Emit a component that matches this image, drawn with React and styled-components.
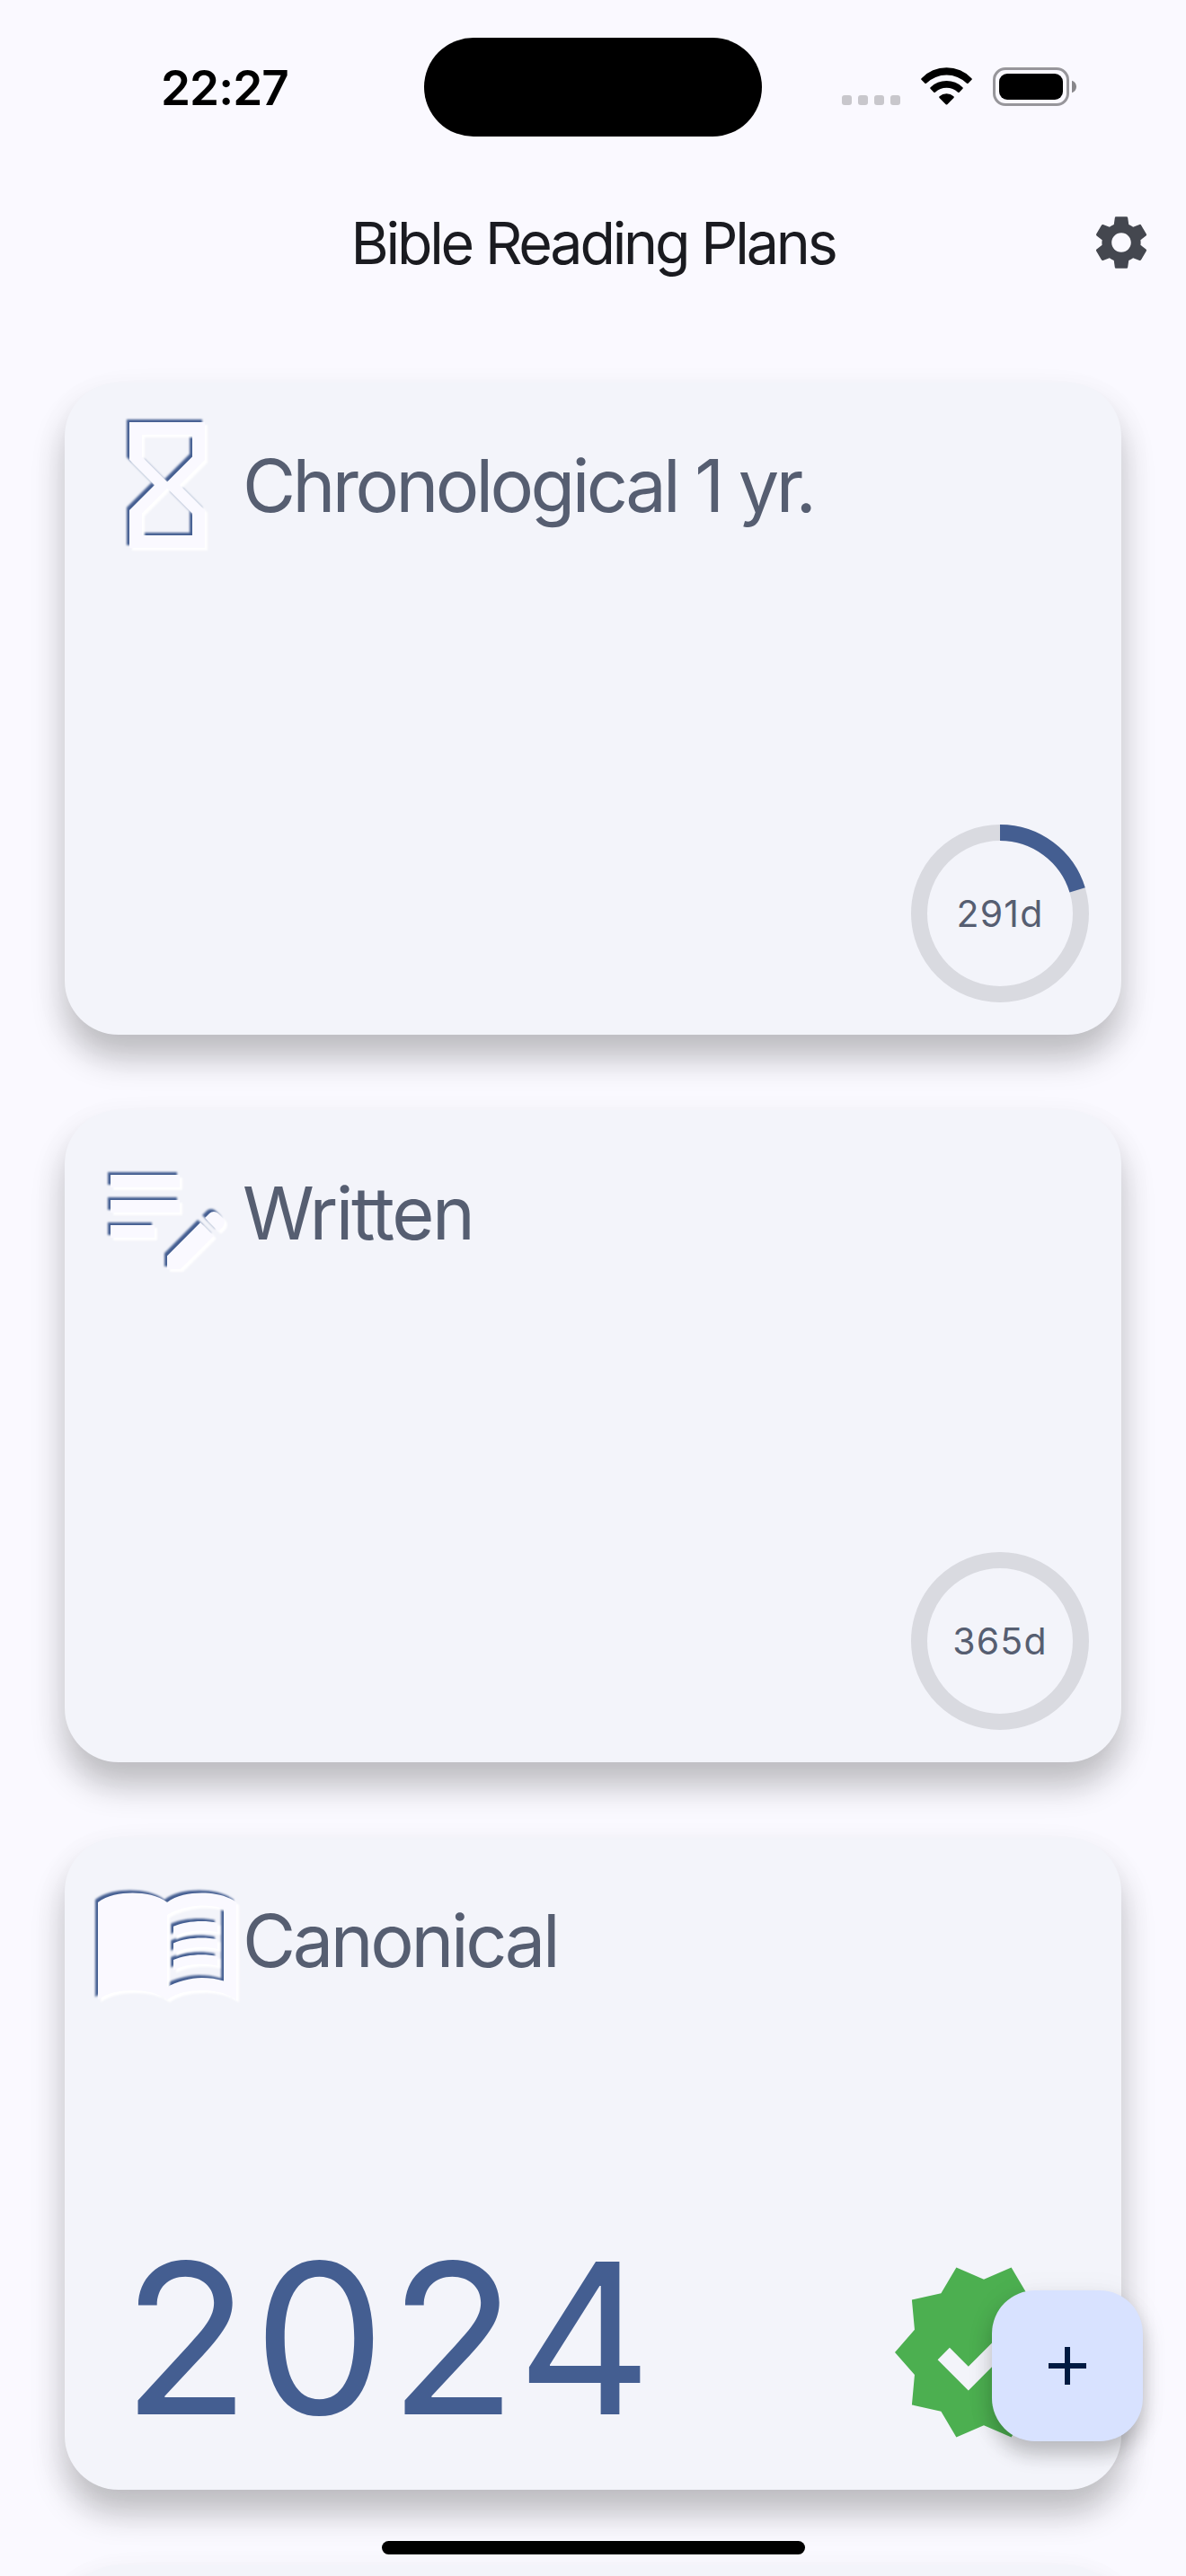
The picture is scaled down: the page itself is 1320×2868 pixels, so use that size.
import React from "react";
import styled, { createGlobalStyle } from "styled-components";
import { MdSettings, MdVerified } from "react-icons/md";

const color = {
  surface: "#faf9ff",
  card: "#f3f4fa",
  text: "#1a1b20",
  muted: "#565e71",
  primary: "#445e91",
  track: "#d9dae0",
  icon: "#44474f",
  fab: "#d8e2ff",
  onFab: "#001a41",
  done: "#4caf50",
};

const GlobalStyle = createGlobalStyle`
  * { box-sizing: border-box; }
  body { margin: 0; background: ${color.surface}; }
`;

const Screen = styled.div`
  position: relative;
  display: flex;
  flex-direction: column;
  width: 1320px;
  height: 2868px;
  overflow: hidden;
  background: ${color.surface};
  font-family: Inter, "Liberation Sans", sans-serif;
`;

const StatusBar = styled.div`
  display: grid;
  grid-template-columns: 472px 376px 472px;
  flex: none;
  height: 186px;
  padding-top: 42px;
`;

const Clock = styled.div`
  height: 112px;
  padding: 0 0 0 179px;
  font-size: 53px;
  font-weight: 600;
  line-height: 112px;
  letter-spacing: -0.9px;
  color: #000;
`;

const Island = styled.div`
  height: 110px;
  border-radius: 55px;
  background: #000;
`;

const StatusIcons = styled.div`
  display: flex;
  align-items: flex-end;
  height: 76px;
  padding-left: 89px;
`;

const SignalDots = styled.div`
  display: flex;
  gap: 7px;
  margin-bottom: 1px;
  span {
    width: 11px;
    height: 11px;
    border-radius: 3px;
    background: #c8c7cc;
  }
`;

const WifiSvg = styled.svg`
  margin: 0 23px 1px;
`;

const AppBar = styled.header`
  display: grid;
  grid-template-columns: 144px 1fr 144px;
  align-items: center;
  justify-items: center;
  flex: none;
  height: 168px;
`;

const AppTitle = styled.h1`
  grid-column: 2;
  margin: 0;
  padding-top: 2px;
  font-size: 64.5px;
  font-weight: 400;
  line-height: 84px;
  letter-spacing: -3.2px;
  white-space: nowrap;
  color: ${color.text};
`;

const SettingsButton = styled.button`
  display: flex;
  padding: 0;
  border: 0;
  background: none;
  color: ${color.icon};
`;

const PlanList = styled.main`
  display: flex;
  flex-direction: column;
  gap: 84px;
  padding: 72px;
`;

const Card = styled.article`
  display: flex;
  flex-direction: column;
  justify-content: space-between;
  flex: none;
  height: 726px;
  padding: 30px 36px 36px 30px;
  border-radius: 60px;
  background: ${color.card};
  box-shadow:
    0 26px 36px rgba(0, 0, 0, 0.23),
    0 14px 52px rgba(0, 0, 0, 0.03);
`;

const CardHeader = styled.div`
  display: flex;
  align-items: center;
  height: 168px;
`;

const PlanTitle = styled.h2`
  margin: 0;
  padding-top: 1px;
  font-size: 81px;
  font-weight: 400;
  line-height: 108px;
  letter-spacing: ${(p) => p.$tracking}px;
  white-space: nowrap;
  color: ${color.muted};
`;

const CardFooter = styled.div`
  display: flex;
  align-items: flex-end;
  justify-content: ${(p) => (p.$split ? "space-between" : "flex-end")};
  padding: ${(p) => (p.$split ? "0 9px 9px 34px" : "0")};
`;

const Year = styled.div`
  margin-bottom: 8px;
  font-size: 233px;
  line-height: 232px;
  letter-spacing: 3.9px;
  color: ${color.primary};
`;

const Gauge = styled.div`
  display: grid;
  width: 198px;
  height: 198px;
  > * {
    grid-area: 1 / 1;
  }
`;

const GaugeLabel = styled.span`
  align-self: center;
  justify-self: center;
  font-size: 41px;
  line-height: 60px;
  letter-spacing: 1.2px;
  color: ${color.muted};
`;

const Fab = styled.button`
  position: absolute;
  right: 48px;
  bottom: 150px;
  display: flex;
  align-items: center;
  justify-content: center;
  width: 168px;
  height: 168px;
  padding: 0;
  border: 0;
  border-radius: 48px;
  background: ${color.fab};
  box-shadow:
    0 14px 22px rgba(0, 0, 0, 0.22),
    0 4px 36px rgba(0, 0, 0, 0.05);
`;

const HomeIndicator = styled.div`
  position: absolute;
  left: 425px;
  bottom: 24px;
  width: 471px;
  height: 15px;
  border-radius: 8px;
  background: #000;
`;

const Embossed = styled.svg`
  flex: none;
  overflow: visible;
  .shade {
    fill: ${color.primary};
    filter: blur(1.2px);
  }
  .light {
    fill: #fff;
    filter: blur(1.2px);
  }
  .face {
    fill: ${color.surface};
  }
`;

const planIcons = {
  hourglass:
    "M6 2v6h.01L6 8.01 10 12l-4 4 .01.01H6V22h12v-5.99h-.01L18 16l-4-4 4-3.99-.01-.01H18V2H6zm10 14.5V20H8v-3.5l4-4 4 4zm-4-5l-4-4V4h8v3.5l-4 4z",
  note:
    "M3 10h11v2H3v-2zm0-2h11V6H3v2zm0 8h7v-2H3v2zm15.01-3.13.71-.71c.39-.39 1.02-.39 1.41 0l.71.71c.39.39.39 1.02 0 1.41l-.71.71-2.12-2.12zm-.71.71-5.3 5.3V21h2.12l5.3-5.3-2.12-2.12z",
  book:
    "M17.5 4.5c-1.95 0-4.05.4-5.5 1.5-1.45-1.1-3.55-1.5-5.5-1.5S2.45 4.9 1 6v15.5C2.45 20.4 4.55 20 6.5 20s4.05.4 5.5 1.5c1.45-1.1 3.55-1.5 5.5-1.5s4.05.4 5.5 1.5V6c-1.45-1.1-3.55-1.5-5.5-1.5zM21 18.5c-1.1-.35-2.3-.5-3.5-.5-1.7 0-4.15.65-5.5 1.5V8c1.35-.85 3.8-1.5 5.5-1.5 1.2 0 2.4.15 3.5.5v11.5zM17.5 10.5c.88 0 1.73.09 2.5.26V9.24c-.79-.15-1.64-.24-2.5-.24-1.7 0-3.24.29-4.5.83v1.66c1.13-.64 2.7-.99 4.5-.99zM13 12.49v1.66c1.13-.64 2.7-.99 4.5-.99.88 0 1.73.09 2.5.26V11.9c-.79-.15-1.64-.24-2.5-.24-1.7 0-3.24.3-4.5.83zM17.5 14.33c-1.7 0-3.24.29-4.5.83v1.66c1.13-.64 2.7-.99 4.5-.99.88 0 1.73.09 2.5.26v-1.52c-.79-.16-1.64-.24-2.5-.24z",
};

function PlanIcon({ name }) {
  const d = planIcons[name];
  return (
    <Embossed width="168" height="168" viewBox="0 0 168 168">
      <g className="shade">
        <path d={d} fillRule="evenodd" transform="translate(-3 -3) scale(7)" />
      </g>
      <g className="light">
        <path d={d} fillRule="evenodd" transform="translate(3 3) scale(7)" />
      </g>
      <path className="face" d={d} fillRule="evenodd" transform="scale(7)" />
    </Embossed>
  );
}

function DaysGauge({ left, total }) {
  const r = 90;
  const length = 2 * Math.PI * r;
  const done = ((total - left) / total) * length;
  return (
    <Gauge>
      <svg width="198" height="198" viewBox="0 0 198 198" fill="none" strokeWidth="18">
        <circle cx="99" cy="99" r={r} stroke={color.track} />
        {done > 0 && (
          <circle
            cx="99"
            cy="99"
            r={r}
            stroke={color.primary}
            strokeDasharray={`${done} ${length}`}
            transform="rotate(-90 99 99)"
          />
        )}
      </svg>
      <GaugeLabel>{left}d</GaugeLabel>
    </Gauge>
  );
}

function Wifi() {
  return (
    <WifiSvg width="57" height="42" viewBox="0 0 57 42">
      <path d="M.6 12.2A38.5 38.5 0 0 1 56.4 12.2Q57.3 13 56.5 13.8L52.6 17.7Q51.8 18.4 51 17.7A32.4 32.4 0 0 0 6 17.7Q5.2 18.4 4.4 17.7L.5 13.8Q-.3 13 .6 12.2Z" />
      <path d="M10.6 22.2A25.8 25.8 0 0 1 46.4 22.2Q47.3 23 46.5 23.8L42.7 27.7Q41.9 28.4 41.1 27.7A18.8 18.8 0 0 0 15.9 27.7Q15.1 28.4 14.3 27.7L10.5 23.8Q9.7 23 10.6 22.2Z" />
      <path d="M20.6 32.2A12 12 0 0 1 36.4 32.2Q37.3 33 36.5 33.9L29.3 41.2Q28.5 42 27.7 41.2L20.5 33.9Q19.7 33 20.6 32.2Z" />
    </WifiSvg>
  );
}

function Battery() {
  return (
    <svg width="93" height="43" viewBox="0 0 93 43">
      <rect x="1.5" y="1.5" width="82" height="40" rx="12.5" fill="none" stroke="#97969b" strokeWidth="3" />
      <rect x="7" y="7" width="71" height="29" rx="9" />
      <path d="M88 14.8c3 .9 5 3.600 5 6.700s-2 5.800-5 6.700z" fill="#88878b" />
    </svg>
  );
}

const plans = [
  { icon: "hourglass", title: "Chronological 1 yr.", tracking: -3.6, left: 291 },
  { icon: "note", title: "Written", tracking: -2.5, left: 365 },
  { icon: "book", title: "Canonical", tracking: -3.4, year: 2024 },
];

function PlanCard({ plan }) {
  return (
    <Card>
      <CardHeader>
        <PlanIcon name={plan.icon} />
        <PlanTitle $tracking={plan.tracking}>{plan.title}</PlanTitle>
      </CardHeader>
      <CardFooter $split={Boolean(plan.year)}>
        {plan.year ? (
          <>
            <Year>{plan.year}</Year>
            <MdVerified size={216} color={color.done} />
          </>
        ) : (
          <DaysGauge left={plan.left} total={365} />
        )}
      </CardFooter>
    </Card>
  );
}

export default function App() {
  return (
    <Screen>
      <GlobalStyle />
      <StatusBar>
        <Clock>22:27</Clock>
        <Island />
        <StatusIcons>
          <SignalDots>
            <span />
            <span />
            <span />
            <span />
          </SignalDots>
          <Wifi />
          <Battery />
        </StatusIcons>
      </StatusBar>
      <AppBar>
        <AppTitle>Bible Reading Plans</AppTitle>
        <SettingsButton aria-label="Settings">
          <MdSettings size={72} />
        </SettingsButton>
      </AppBar>
      <PlanList>
        {plans.map((plan) => (
          <PlanCard key={plan.title} plan={plan} />
        ))}
        <Card />
      </PlanList>
      <Fab aria-label="Add plan">
        <svg width="72" height="72" viewBox="0 0 24 24">
          <path d="M19 13h-6v6h-2v-6H5v-2h6V5h2v6h6v2z" fill={color.onFab} />
        </svg>
      </Fab>
      <HomeIndicator />
    </Screen>
  );
}
